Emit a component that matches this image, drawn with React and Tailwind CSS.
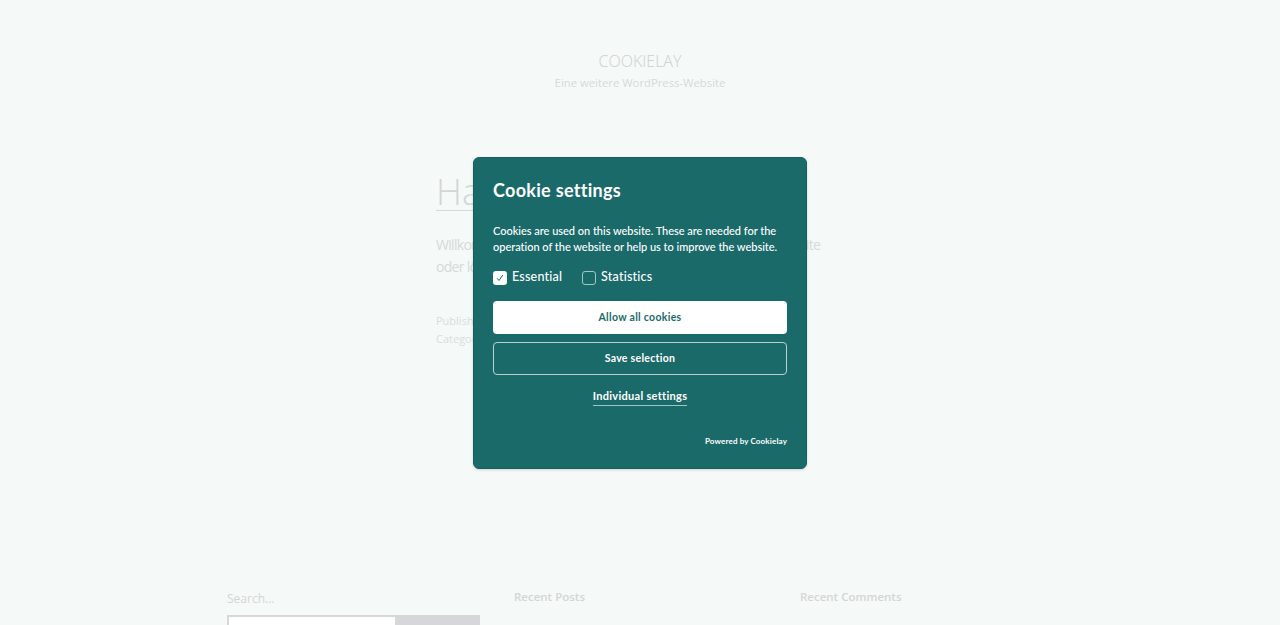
import React from "react";

export default function App() {
  return (
    <div className="relative h-[625px] w-[1280px] overflow-hidden bg-[#f5f9f8] font-['Open_Sans',sans-serif]">
      {/* Background page */}
      <header className="flex flex-col items-center pt-[50px]">
        <div className="text-[16px] font-light leading-[22px] text-[#cdd0d0]">COOKIELAY</div>
        <div className="text-[11.3px] leading-[22px] text-[#d6d9d9]">Eine weitere WordPress-Website</div>
      </header>

      <main className="ml-[436px] mt-[80px] w-[420px]">
        <h1 className="inline-block border-b border-[#d6d9d9] text-[36px] font-light leading-[36px] text-[#d3d6d6]">Hallo Welt!</h1>
        <p className="mt-[23px] text-[14px] leading-[22px] tracking-[-0.7px] text-[#d6d9d9]">
          Willkommen bei WordPress. Dies ist dein erster Beitrag. Bearbeite
          <br />
          oder lösche ihn und beginne mit dem Schreiben!
        </p>
        <div className="mt-[34px] text-[11px] leading-[18px] text-[#dadddd]">
          <div>Published 1. Januar 2024</div>
          <div>Categorized as Allgemein</div>
        </div>
      </main>

      <footer className="absolute left-[227px] top-[588px] flex w-[860px]">
        <div className="w-[287px]">
          <div className="text-[12px] leading-[22px] text-[#d3d6d6]">Search...</div>
          <div className="mt-[5px] flex h-[20px] w-[253px] border-t-[2px] border-l-[2px] border-[#d6d7d9]">
            <div className="w-[166px] bg-white"></div>
            <div className="flex-1 bg-[#d6d7d9]"></div>
          </div>
        </div>
        <div className="w-[286px] text-[11.5px] font-semibold leading-[18px] text-[#d3d6d6]">Recent Posts</div>
        <div className="text-[11.5px] font-semibold leading-[18px] text-[#d3d6d6]">Recent Comments</div>
      </footer>

      {/* Cookie dialog */}
      <div className="absolute inset-0 flex items-center justify-center">
        <div className="flex h-[312px] w-[334px] flex-col rounded-[6px] border border-[#15605f] bg-[#1b6a6a] px-[19px] pt-[19px] pb-[21px] font-['Lato',sans-serif] text-white shadow-[0_1px_3px_rgba(0,0,0,0.15)]">
          <h2 className="text-[18px] font-bold leading-[26px] tracking-[0.3px]">Cookie settings</h2>
          <p className="mt-[20px] text-[11px] font-medium leading-[16px] tracking-[-0.02px]">
            Cookies are used on this website. These are needed for the operation of the website or help us to improve the website.
          </p>
          <div className="mt-[13px] flex h-[20px] items-center gap-[20px] text-[12.5px] font-medium">
            <div className="flex items-center gap-[5px]">
              <span className="flex h-[14px] w-[14px] items-center justify-center rounded-[3px] bg-white">
                <svg width="10" height="10" viewBox="0 0 10 10" fill="none">
                  <path d="M2.4 5.6 L4 7.5 L7.6 2.3" stroke="#1b6a6a" strokeWidth="1" strokeLinecap="round" strokeLinejoin="round" />
                </svg>
              </span>
              <span className="tracking-[0.2px]">Essential</span>
            </div>
            <div className="flex items-center gap-[5px]">
              <span className="h-[14px] w-[14px] rounded-[3px] border border-[#a6c6c4]"></span>
              <span className="tracking-[0.2px]">Statistics</span>
            </div>
          </div>
          <button className="mt-[13px] h-[33px] w-full rounded-[4px] bg-white pt-[2px] text-[10.5px] font-bold tracking-[0.3px] text-[#1b6a6a]">
            Allow all cookies
          </button>
          <button className="mt-[8px] h-[33px] w-full rounded-[4px] border border-[#b9d2d0] pt-[1px] text-[10.5px] font-bold tracking-[0.3px] text-white">
            Save selection
          </button>
          <div className="mt-[13px] flex justify-center">
            <span className="border-b border-[#9fc3c1] pb-[1px] text-[11px] font-bold leading-[16px] tracking-[0.3px]">Individual settings</span>
          </div>
          <div className="mt-auto text-right text-[8px] font-bold leading-[12px] tracking-[0.15px]">Powered by Cookielay</div>
        </div>
      </div>
    </div>
  );
}
